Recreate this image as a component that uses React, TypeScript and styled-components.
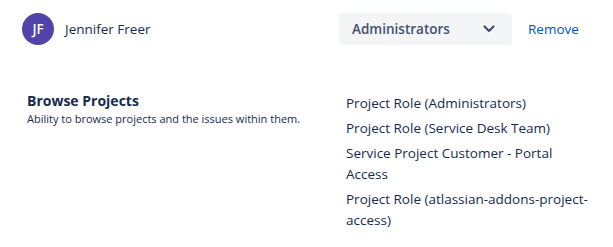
import React from 'react';
import styled, { createGlobalStyle } from 'styled-components';

const GlobalStyle = createGlobalStyle`
  body {
    margin: 0;
    background: #ffffff;
    font-family: "Segoe UI", "Open Sans", "Noto Sans", sans-serif;
    color: #172b4d;
  }
`;

const roles = [
  'Project Role (Administrators)',
  'Project Role (Service Desk Team)',
  'Service Project Customer - Portal Access',
  'Project Role (atlassian-addons-project-access)',
];

const App: React.FC = () => {
  return (
    <>
      <GlobalStyle />
      <Page>
        <UserCell>
          <Avatar>JF</Avatar>
          <UserName>Jennifer Freer</UserName>
        </UserCell>
        <ActionsCell>
          <RoleSelect>
            <span>Administrators</span>
            <svg width="12" height="8" viewBox="0 0 12 8" aria-hidden="true">
              <path d="M1.5 1.5 L6 6 L10.5 1.5" fill="none" stroke="#42526e" strokeWidth="2.2" strokeLinecap="round" strokeLinejoin="round" />
            </svg>
          </RoleSelect>
          <RemoveLink href="#">Remove</RemoveLink>
        </ActionsCell>

        <Permission>
          <PermissionTitle>Browse Projects</PermissionTitle>
          <PermissionText>Ability to browse projects and the issues within them.</PermissionText>
        </Permission>
        <RoleList>
          {roles.map((role) => (
            <RoleItem key={role}>{role}</RoleItem>
          ))}
        </RoleList>
      </Page>
    </>
  );
};

const Page = styled.div`
  display: grid;
  grid-template-columns: 317px 1fr;
  grid-template-rows: 32px auto;
  row-gap: 46px;
  padding: 13px 0 0 22px;
`;

const UserCell = styled.div`
  display: flex;
  align-items: center;
  gap: 11px;
`;

const Avatar = styled.div`
  width: 32px;
  height: 32px;
  border-radius: 50%;
  background: #5243aa;
  color: #ffffff;
  display: flex;
  align-items: center;
  justify-content: center;
  font-size: 13.5px;
  font-weight: 600;
`;

const UserName = styled.span`
  font-size: 13.5px;
  color: #172b4d;
`;

const ActionsCell = styled.div`
  display: flex;
  align-items: center;
  gap: 16px;
`;

const RoleSelect = styled.div`
  width: 173px;
  height: 32px;
  box-sizing: border-box;
  padding: 0 17px 0 13px;
  background: #f4f5f7;
  border-radius: 3px;
  display: flex;
  align-items: center;
  justify-content: space-between;
  font-size: 13.5px;
  font-weight: 600;
  color: #42526e;
`;

const RemoveLink = styled.a`
  font-size: 13.5px;
  font-weight: 500;
  color: #0052cc;
  text-decoration: none;
`;

const Permission = styled.div`
  padding-left: 5px;
`;

const PermissionTitle = styled.div`
  font-size: 14px;
  font-weight: 700;
  line-height: 20px;
  color: #172b4d;
`;

const PermissionText = styled.div`
  font-size: 11px;
  line-height: 16px;
  color: #172b4d;
`;

const RoleList = styled.ul`
  list-style: none;
  margin: 2px 0 0;
  padding: 0 0 0 7px;
  width: 250px;
  display: flex;
  flex-direction: column;
  gap: 4px;
`;

const RoleItem = styled.li`
  font-size: 13.5px;
  line-height: 21px;
  color: #172b4d;
`;

export default App;
